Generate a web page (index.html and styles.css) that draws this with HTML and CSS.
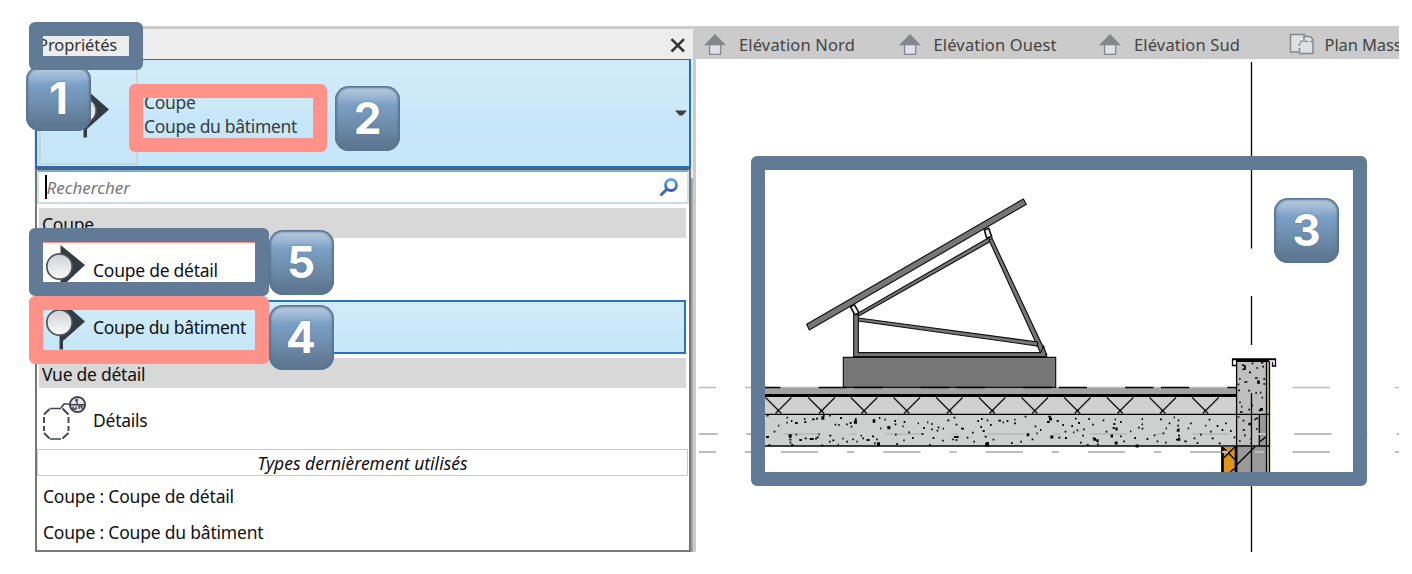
FILE: index.html
```html
<!DOCTYPE html>
<html lang="fr">
<head>
<meta charset="utf-8">
<title>Propriétés - Coupe</title>
<link rel="stylesheet" href="styles.css">
</head>
<body>
<svg class="defs" width="0" height="0">
  <defs>
    <linearGradient id="ball" x1="0" y1="0" x2="0" y2="1"><stop offset="0" stop-color="#cfd1d8"/><stop offset="1" stop-color="#fafafa"/></linearGradient>
    <linearGradient id="lens" x1="0" y1="0" x2="0" y2="1"><stop offset="0" stop-color="#5fa8dc"/><stop offset="1" stop-color="#3a5cae"/></linearGradient>
    <symbol id="house" viewBox="0 0 24 24">
      <path d="M12 1 23 12.2H1z" fill="#85878c"/>
      <path d="M6.6 11.5h11v9.8h-11z" fill="#dfe1e6" stroke="#85878c" stroke-width="1.300"/>
    </symbol>
    <symbol id="section" viewBox="0 0 46 60">
      <path d="M19 6.500 44 28.500 22 48v8.500h-3.500V44z" fill="#343b45"/>
      <circle cx="18.500" cy="29.500" r="12.700" fill="url(#ball)" stroke="#4b4f57" stroke-width="1.700"/>
    </symbol>
    <symbol id="section-detail" viewBox="0 0 46 60">
      <path d="M19.500 7 44 27 19.500 50z" fill="#343b45"/>
      <circle cx="18.500" cy="28.500" r="12.700" fill="url(#ball)" stroke="#4b4f57" stroke-width="1.700"/>
    </symbol>
  </defs>
</svg>
<div class="stage">
  <main class="app">
    <section class="panel">
      <header class="titlebar">
        <span class="t-prop">Propriétés</span>
        <svg class="close" width="16" height="15" viewBox="0 0 16 15"><path d="M1.500 1.200 14 13.500M14 1.200 1.500 13.500" stroke="#333" stroke-width="2.500"/></svg>
      </header>
      <div class="selector">
        <div class="preview"><svg width="46" height="60"><use href="#section"/></svg></div>
        <div class="family"><span class="t-fam">Coupe</span><span class="t-type">Coupe du bâtiment</span></div>
        <svg class="arrow" width="12" height="7" viewBox="0 0 12 7"><path d="M0 .5h12l-4.500 5h-3z" fill="#404040"/></svg>
      </div>
      <div class="dropdown">
        <div class="search">
          <i class="caret"></i><span class="t-search">Rechercher</span>
          <svg width="20" height="20" viewBox="0 0 20 20"><path d="m1.500 18.500 6-6" stroke="#4667b4" stroke-width="3"/><circle cx="12" cy="8" r="5.500" fill="#f4f9fe" stroke="url(#lens)" stroke-width="2.800"/></svg>
        </div>
        <div class="heading first"><span class="t-h1">Coupe</span></div>
        <div class="item detail"><svg width="46" height="60"><use href="#section-detail"/></svg><span class="t-cd">Coupe de détail</span></div>
        <div class="item building"><svg width="46" height="60"><use href="#section"/></svg><span class="t-cb">Coupe du bâtiment</span></div>
        <div class="heading second"><span class="t-vd">Vue de détail</span></div>
        <div class="item callout">
          <svg width="46" height="48" viewBox="0 0 46 48" fill="none" stroke="#3f444d" stroke-width="1.700">
            <path d="M9 15.500h11M9 46h11" />
            <path d="M3 24v6m0 3v5M27.500 24v6m0 3v5M3 21.500l5.500-5.500M27.500 21.500l-6-6M3 40l5.500 5.500M27.500 40l-6 5.500" stroke-width="1.900"/>
            <path d="m20 15 3-4h5"/>
            <circle cx="36.500" cy="11.500" r="7.600" fill="#e7e8eb" stroke-width="2"/><path d="M28 11.700h17M34 7.500l2-1v5m-4 2v2.500h3v-2.500m3 2.500v-2.500h3v2.500" stroke-width="1.400"/>
          </svg>
          <span class="t-det">Détails</span>
        </div>
        <div class="recent-title"><span class="t-types">Types dernièrement utilisés</span></div>
        <div class="recent"><span class="t-r1">Coupe : Coupe de détail</span><span class="t-r2">Coupe : Coupe du bâtiment</span></div>
      </div>
    </section>
    <section class="view">
      <nav class="tabs">
        <div class="tab"><svg width="24" height="24"><use href="#house"/></svg><span class="t-nord">Elévation Nord</span></div>
        <div class="tab wide"><svg width="24" height="24"><use href="#house"/></svg><span class="t-ouest">Elévation Ouest</span></div>
        <div class="tab mid"><svg width="24" height="24"><use href="#house"/></svg><span class="t-sud">Elévation Sud</span></div>
        <div class="tab"><svg width="26" height="24" viewBox="0 0 26 24" fill="#dfe1e5" stroke="#85878c" stroke-width="1.500"><path d="M1.500 1.500h14v17.500h-14z"/><path d="M10.500 8.500h4v-5h7l2.500 2.500v14.500H10.500z" stroke="none"/><path d="M14 3.500h7l3 3v14H10.500v-2M15 3.500v5"/><path d="M10.500 18V8.500h13" fill="none" stroke-dasharray="3 2"/></svg><span class="t-plan">Plan Mass</span></div>
      </nav>
      <svg class="drawing" width="703" height="493" viewBox="696 59 703 493">
        <g fill="none" stroke="#bcbcbc" stroke-width="1.500" stroke-dasharray="37.300 28.800 7.200 29" stroke-dashoffset="20.300">
          <path d="M699 387.500h700"/>
        </g>
        <g transform="translate(790 190) scale(.33333)" stroke="#111" stroke-width="3.500" fill="#777">
          <path d="M50 403 700 27l9 16L58 420z"/>
          <path d="m583 120 13-5 9 25-15 4zM181 350l12-6 14 24-12 7z" fill="#eee" stroke-width="5"/>
          <path d="m205 369 390-225 8 9-398 226z"/>
          <path d="m597 150 9-5 164 349h-16z"/>
          <path d="m205 384 538 72v12L205 393z"/>
          <path d="M191 374h14v114h547l9-20 9 32H191z"/>
          <path d="M160 502h637v90H160z"/>
        </g>
        <g shape-rendering="crispEdges">
          <path d="M765 388h471v6H765z" fill="#a2a2a2"/>
          <path d="M765 394h472v3H765z"/>
          <path d="M765 397h472v17H765z" fill="#d0d0d0"/>
          <path d="M765 415h472v31H765z" fill="#cdd0cf"/>
          <path d="M1221 447h16v25h-16z" fill="#db9416"/>
          <path d="M1237 361h29v86h-29z" fill="#bfbfbf"/>
          <path d="M1259 415h7v31h-7zM1237 447h29v25h-29z" fill="#999"/>
          <path d="M1267 361h3v111h-3z" fill="#cdbf96"/>
        </g>
        <path d="M765 387.400H1236" fill="none" stroke="#000" stroke-width="1.500" stroke-dasharray="28.500 7.300 28.500 37.900" stroke-dashoffset="48.700"/>
        <path d="m765.500 397.500 16 16M791.500 397.500l-16 16M808.200 397.500l16 16M834.900 397.500l-16 16M850.800 397.500l16 16M877.300 397.500l-16 16M893.500 397.500l16 16M920 397.500l-16 16M936.200 397.500l16 16M962.600 397.500l-16 16M978.900 397.500l16 16M1005.300 397.500l-16 16M1021.500 397.500l16 16M1048 397.500l-16 16M1064.200 397.500l16 16M1090.600 397.500l-16 16M1106.900 397.500l16 16M1133.300 397.500l-16 16M1149.500 397.500l16 16M1176 397.500l-16 16M1192.200 397.500l16 16M1218.700 397.500l-16 16" fill="none" stroke="#111" stroke-width="1.300"/>
        <path d="M777 410.800h2m41 0h3m40 0h2m41 0h2m41 0h2m40 0h3m40 0h2m40 0h3m40 0h2m40 0h3m40 0h2" fill="none" stroke="#111" stroke-width="2"/>
        <g fill="none" stroke="#bdbdbd" stroke-width="2" stroke-dasharray="37.300 28.800 7.200 29">
          <path d="M699 434h700" stroke-dashoffset="18.600"/>
          <path d="M699 452h700" stroke-dashoffset="20.300"/>
        </g>
        <g transform="translate(690 350) scale(.33333)" fill="none" stroke="#000" stroke-width="5.500">
          <path d="M230 197h6M290 203h4M289 218h4M264 227h4M251 245h5M228 261h9M236 285h5M303 213h4M315 219h8M343 216h6M342 207h4M366 208h8M378 206h6M399 197h5M417 197h5M450 204h6M434 224h5M445 225h4M468 223h5M479 219h6M482 230h5M495 207h5M298 269h6M299 278h5M328 270h8M344 265h6M359 267h12M375 266h6M380 262h6M385 253h4M317 254h4M304 285h6M394 286h5M418 257h6M427 271h6M417 275h5M443 284h4M457 266h4M469 275h5M487 268h5M499 275h4M512 257h4M517 265h5M530 270h9M546 259h6M558 268h5M567 204h4M583 209h4M570 235h4M613 213h5M614 223h5M615 254h5M641 216h5M637 229h4M640 271h4M619 282h5M655 247h5M666 264h5M683 220h4M700 234h5M695 252h5M711 217h4M724 222h4M723 238h5M740 242h5M743 232h5M758 236h4M728 264h5M717 285h5M756 272h5M772 211h6M791 203h5M797 224h5M813 236h9M792 261h14M787 268h5M797 270h5M830 263h5M846 248h5M850 275h5M862 213h5M871 231h5M890 211h5M884 260h6M888 279h8M552 280h5"/>
          <path d="M394 204h9M492 216h9M548 213h8M592 233h9M296 258h9M561 282h9M885 285h12" stroke-width="10"/>
          <path d="M873 207h5M878 243h6M890 279h5M900 225h5M908 269h5M925 212h8M938 217h4M950 213h5M972 220h6M973 209h4M991 275h5M963 279h5M1004 200h5M1034 229h5M1039 250h4M1025 268h5M1050 240h4M1071 216h8M1075 200h8M1100 213h6M1117 225h5M1124 245h5M1105 263h6M1125 264h6M1144 228h5M1149 247h4M1160 241h5M1155 206h5M1164 219h6M1179 238h5M1177 257h5M1170 278h5M1195 207h5M1207 224h5M1208 265h6M1190 285h6M1221 283h5M1238 211h5M1247 245h5M1274 208h4M1270 222h6M1268 234h6M1290 216h5M1290 259h5M1300 274h5M1320 244h4M1333 264h5M1344 233h5M1355 207h4M1355 223h4M1355 236h5M1370 267h5M1391 256h5M1400 274h5M1410 208h6M1427 235h4M1418 250h5M1425 278h5M1436 220h5M1451 202h4M1463 211h5M1462 227h5M1460 242h7M1464 257h6M1458 269h9M1483 274h7M1493 235h4M1500 220h5M1511 265h5M1520 279h5M1530 254h5M1545 227h4M1556 209h5M1560 245h5M1565 265h6M1580 228h5M1595 240h5M1586 280h6M1605 220h5M1620 243h5M1631 262h5"/>
          <path d="M1010 254h8M1077 207h9M1081 261h9M1210 268h8M1219 272h7M1262 258h7M1274 279h9M1276 237h7M1462 240h7M1464 268h7M1337 288h9" stroke-width="9"/>
        </g>
        <g transform="translate(1200 340) scale(.33333)" fill="none" stroke="#000" stroke-width="5">
          <path d="M126 74l9 4v9l-8 1M155 70h5M169 84h5M183 68h7M187 80h5M147 97h6M117 117h5M113 133h5M133 126h9M165 114h8M171 129h9M190 117h6M190 132h6M115 151h5M145 152h5M166 159h5M180 158h4M185 173h4M118 187h4M123 200h4M120 216h8M145 209h5M154 196h5M176 211h7M113 231h5M128 242h5M147 252h6M163 238h5M128 270h7M132 286h5M168 267h5M151 297h5M117 303h5M151 309h5M167 235h7"/>
          <path d="M172 125h7M180 208h9M145 252h8" stroke-width="8"/>
          <path d="M110 375 165 320M180 305l17-14M70 323l35 36M105 320 72 353M90 396l18-13" stroke-width="4"/>
        </g>
        <g fill="none" stroke="#000" stroke-width="1.300">
          <path d="M765 414.300h504M765 446h504"/>
          <path d="M1236.600 360v112M1266.500 361v111M1269.500 361v111M1259.300 415v31"/>
          <path d="M1232 359.200h44M1237 361h32" stroke-width="2"/>
          <path d="M1232.500 359v6.500h4M1233 365.500h3.500M1275.500 359v7h-3v-4"/>
          <path d="M1222.500 447v25M1236 447v25" stroke-width="2.600"/>
          <path d="M1251.500 62v186.500M1251.500 296v49M1251.500 393v159"/>
        </g>
        <path d="M1222 452h6m27 0h9m-7-18h9" stroke="#bdbdbd" stroke-width="2"/>
      </svg>
    </section>
  </main>
  <b class="key k1">1</b>
  <b class="key k2">2</b>
  <b class="key k3">3</b>
  <b class="key k5">5</b>
  <b class="key k4">4</b>
  <i class="frame f1"></i>
  <i class="frame coral f2"></i>
  <i class="frame f3"></i>
  <i class="frame f5"></i>
  <i class="frame coral f4"></i>
</div>
</body>
</html>
```
FILE: styles.css
```css
* { box-sizing: border-box; }
body { margin: 0; background: #fff; color: #111; font: 17.500px/24px "Noto Sans", "Open Sans", sans-serif; letter-spacing: -.25px; }
.defs { position: absolute; }
.stage { position: relative; width: 1412px; height: 574px; padding: 26px 13px 22px 34px; overflow: hidden; }
.app { display: flex; height: 526px; overflow: hidden; }
span { white-space: nowrap; }
svg { flex: none; display: block; }

.panel { flex: none; width: 662px; height: 526px; border-top: 3px solid #cbcbcb; border-right: 3px solid #cbcbcb; background: linear-gradient(#ededed 149px, transparent 149px), linear-gradient(90deg, transparent 655px, #858585 656px, #b4b4b4); }
.titlebar { height: 30px; display: flex; align-items: center; justify-content: space-between; padding: 2px 7px 0 4px; font-size: 16.500px; letter-spacing: -.1px; color: #333; }
.selector { display: flex; align-items: center; width: 656px; height: 109px; margin-left: 1px; padding: 0 2px 0 2px; border: 2px solid #1c6fc6; border-top-width: 1.500px; background: linear-gradient(#d1ebf9, #cbe9f8 46%, #c7e6fa 52%, #c5e7f7); color: #3b3b3b; }
.preview { width: 99px; height: 104px; display: flex; align-items: center; padding: 0 0 5px 24px; border: 2px solid #ccd4d9; }
.family { display: flex; flex-direction: column; flex: 1; padding: 2px 0 0 6px; letter-spacing: -.33px; }
.arrow { margin-top: 1px; }

.dropdown { width: 656px; height: 384px; margin-left: 1px; border: 2px solid #777; border-top-color: #5c5f63; background: #fff; }
.search { display: flex; align-items: center; height: 34px; padding: 0 8px 0 6px; border: 2px solid #cfe4ef; border-top-color: #74b0d8; border-bottom-color: #c8dbe6; color: #777; font-style: italic; font-size: 17px; letter-spacing: 0; }
.search svg { margin-left: auto; margin-top: -1px; }
.search span { padding-top: 1px; }
.caret { width: 1.500px; height: 24px; background: #000; }
.heading { height: 30px; margin: 0 3px 0 2px; padding: 4px 0 0 3px; background: #d8d8d8; }
.first { margin-top: 4px; }
.item { display: flex; align-items: center; padding-left: 4px; gap: 6px; }
.detail { height: 62px; padding-top: 2px; }
.detail svg { margin: -5px 0 0 0; }
.building { height: 54px; margin: 0 3px 0 2px; padding-left: 0; border: 2px solid #2674bd; background: linear-gradient(#d1ebf9, #c5e7f7); letter-spacing: -.33px; }
.building svg { margin-top: -8px; }
.second { margin-top: 4px; }
.callout { height: 61px; padding-top: 3px; }
.callout svg { margin-top: -6px; }
.recent-title { display: flex; align-items: center; justify-content: center; height: 27px; margin-right: 1px; padding-top: 1px; border: 1px solid #cbcbcb; font-style: italic; }
.recent-title span { letter-spacing: 0; }
.recent { display: flex; flex-direction: column; gap: 12px; padding: 8px 0 0 6px; letter-spacing: -.2px; }

.view { flex: 1; min-width: 0; overflow: hidden; }
.tabs { display: flex; height: 33px; padding-left: 7px; background: #cbcbcb; color: #444; font-size: 16.500px; letter-spacing: .15px; overflow: hidden; }
.tab { display: flex; flex: none; align-items: center; gap: 12px; width: 194.500px; padding-top: 5px; }
.wide { width: 200.500px; }
.mid { width: 190.500px; }
.tab:last-child { gap: 10px; letter-spacing: -.1px; }

.frame { position: absolute; border: 14px solid #617b96; border-radius: 6px; }
.coral { border-color: #fe9289; }
.f1 { left: 29px; top: 22px; width: 114px; height: 48px; }
.f2 { left: 129px; top: 84px; width: 198px; height: 68px; }
.f3 { left: 751px; top: 156px; width: 616px; height: 330px; }
.f5 { left: 29px; top: 228px; width: 240px; height: 68px; }
.f5::after { content: ""; display: block; height: 1px; background: #fe9289; }
.f4 { left: 29px; top: 296px; width: 240px; height: 68px; }
.key { position: absolute; width: 65px; height: 65px; border-radius: 14px; display: grid; place-items: center; color: #fff; font: 700 44px/65px Inter, sans-serif; letter-spacing: 0; background: linear-gradient(#b5c9de 3%, #98b4d2 18%, #7b9fc5 29%, #7292b3 52%, #5f7994 88%); box-shadow: inset 0 0 2px 2px #587491; text-shadow: 0 0 2px #587491; }
.k1 { left: 26px; top: 66px; }
.k2 { left: 335px; top: 86px; }
.k3 { left: 1274px; top: 198px; }
.k5 { left: 268.500px; top: 230px; }
.k4 { left: 268.500px; top: 305px; }
```
